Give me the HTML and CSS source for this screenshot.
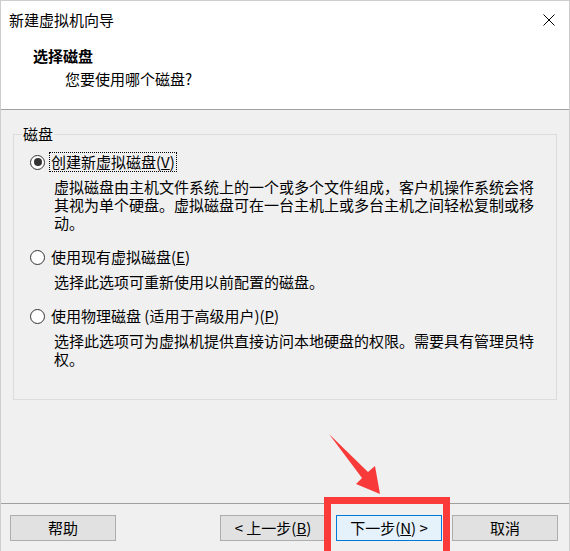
FILE: index.html
```html
<!DOCTYPE html>
<html lang="zh-CN">
<head>
<meta charset="utf-8">
<title>新建虚拟机向导</title>
<link rel="stylesheet" href="styles.css">
</head>
<body>
<div class="window">
  <div class="top">
    <div class="titlebar">
      <span class="title">新建虚拟机向导</span>
      <svg class="close" width="12" height="12" viewBox="0 0 12 12"><path d="M0.5 0.5 L11.5 11.5 M11.5 0.5 L0.5 11.5" stroke="#000" stroke-width="1" fill="none"/></svg>
    </div>
    <div class="head-title">选择磁盘</div>
    <div class="head-sub">您要使用哪个磁盘?</div>
  </div>
  <div class="body">
    <fieldset class="group">
      <legend class="legend">磁盘</legend>
      <div class="option first">
        <span class="radio checked"></span>
        <span class="label focus">创建新虚拟磁盘(<u>V</u>)</span>
      </div>
      <div class="desc">虚拟磁盘由主机文件系统上的一个或多个文件组成，客户机操作系统会将其视为单个硬盘。虚拟磁盘可在一台主机上或多台主机之间轻松复制或移动。</div>
      <div class="option">
        <span class="radio"></span>
        <span class="label">使用现有虚拟磁盘(<u>E</u>)</span>
      </div>
      <div class="desc">选择此选项可重新使用以前配置的磁盘。</div>
      <div class="option">
        <span class="radio"></span>
        <span class="label">使用物理磁盘 (适用于高级用户)(<u>P</u>)</span>
      </div>
      <div class="desc">选择此选项可为虚拟机提供直接访问本地硬盘的权限。需要具有管理员特权。</div>
    </fieldset>
  </div>
  <div class="footer">
    <button class="btn">帮助</button>
    <div class="nav">
      <button class="btn">&lt; 上一步(<u>B</u>)</button>
      <button class="btn primary">下一步(<u>N</u>) &gt;</button>
      <button class="btn">取消</button>
    </div>
  </div>
  <div class="highlight"></div>
  <svg class="arrow" width="60" height="70" viewBox="0 0 60 70">
    <polygon points="3,3 42,41 49,35 54,63 30,53 36,47" fill="#f93a3a"/>
  </svg>
</div>
</body>
</html>
```

FILE: styles.css
```css
* { box-sizing: border-box; }
html, body { margin: 0; padding: 0; }
body {
  background: #f0f0f0;
  font-family: "Noto Sans CJK SC", "Liberation Sans", sans-serif;
  font-size: 15px;
  color: #000;
}
.window {
  position: relative;
  width: 570px;
  height: 551px;
  border: 1px solid #cdcdcd;
  border-bottom: none;
  background: #f0f0f0;
  display: flex;
  flex-direction: column;
  overflow: hidden;
}
.top {
  background: #fff;
  height: 109px;
  border-bottom: 1px solid #a0a0a0;
  flex: none;
}
.titlebar {
  height: 38px;
  display: flex;
  align-items: center;
  justify-content: space-between;
  padding: 0 14px 0 8px;
}
.title { line-height: 20px; }
.close { display: block; }
.head-title {
  margin-top: 7px;
  padding-left: 32px;
  font-weight: bold;
  line-height: 20px;
}
.head-sub {
  margin-top: 3px;
  padding-left: 64px;
  line-height: 20px;
}
.body {
  flex: 1;
  padding: 14px 12px 0 12px;
}
.group {
  margin: 0;
  height: 276px;
  border: 1px solid #dcdcdc;
  padding: 8px 0 0 8px;
}
.legend {
  padding: 0 1px;
  line-height: 20px;
}
.option {
  display: flex;
  align-items: center;
  height: 20px;
  margin-top: 15px;
}
.option.first { margin-top: 0; }
.radio {
  width: 15px;
  height: 15px;
  margin-left: 8px;
  border: 1px solid #333;
  border-radius: 50%;
  background: #fff;
  display: flex;
  align-items: center;
  justify-content: center;
  flex: none;
}
.radio.checked::after {
  content: "";
  width: 8px;
  height: 8px;
  border-radius: 50%;
  background: #333;
}
.label {
  margin-left: 4px;
  padding: 0 1px;
  border: 1px dotted transparent;
  line-height: 18px;
  white-space: nowrap;
}
.label.focus { border-color: #000; }
.desc {
  margin-top: 6px;
  margin-left: 32px;
  width: 482px;
  line-height: 18px;
}
.footer {
  flex: none;
  height: 48px;
  border-top: 1px solid #a0a0a0;
  padding: 11px 11px 0 9px;
  display: flex;
  justify-content: space-between;
  align-items: flex-start;
}
.nav {
  display: flex;
  gap: 10px;
}
.btn {
  width: 106px;
  height: 26px;
  border: 1px solid #adadad;
  background: #e1e1e1;
  font-family: inherit;
  font-size: 15px;
  color: #000;
  padding: 0;
  line-height: 22px;
}
.btn.primary {
  border-color: #0078d7;
  background: #e5f1fb;
}
.highlight {
  position: absolute;
  left: 323px;
  top: 496px;
  width: 126px;
  height: 64px;
  border: 7px solid #fb3a3a;
}
.arrow {
  position: absolute;
  left: 325px;
  top: 430px;
}
```
